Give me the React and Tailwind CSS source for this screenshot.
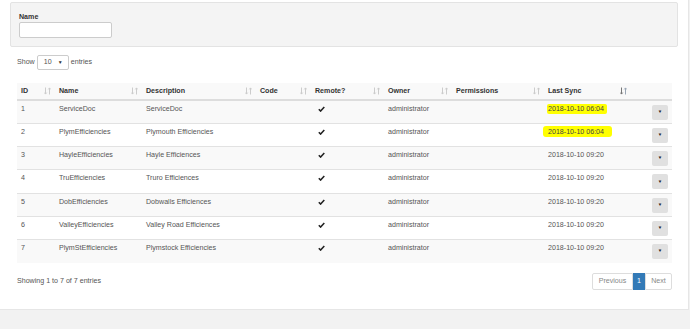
const rows = [
  { id: 1, name: "ServiceDoc", desc: "ServiceDoc", sync: "2018-10-10 06:04", hl: "a" },
  { id: 2, name: "PlymEfficiencies", desc: "Plymouth Efficiencies", sync: "2018-10-10 06:04", hl: "b" },
  { id: 3, name: "HayleEfficiencies", desc: "Hayle Efficiences", sync: "2018-10-10 09:20" },
  { id: 4, name: "TruEfficiencies", desc: "Truro Efficiences", sync: "2018-10-10 09:20" },
  { id: 5, name: "DobEfficiencies", desc: "Dobwalls Efficiences", sync: "2018-10-10 09:20" },
  { id: 6, name: "ValleyEfficiencies", desc: "Valley Road Efficiences", sync: "2018-10-10 09:20" },
  { id: 7, name: "PlymStEfficiencies", desc: "Plymstock Efficiencies", sync: "2018-10-10 09:20" },
];

const columns = [
  { label: "ID", w: "w-[38px]" },
  { label: "Name", w: "w-[87px]" },
  { label: "Description", w: "w-[114px]" },
  { label: "Code", w: "w-[55px]" },
  { label: "Remote?", w: "w-[73px]" },
  { label: "Owner", w: "w-[68px]" },
  { label: "Permissions", w: "w-[92px]" },
  { label: "Last Sync", w: "w-[87px]", active: true },
];

const SortIcon = ({ active }) => (
  <svg width="7" height="8" viewBox="0 0 7 8" className="shrink-0">
    <g fill="none" strokeWidth="1">
      <path d="M1.5 0.5v6.5M0.3 5.6l1.2 1.5 1.2-1.5" stroke={active ? "#777" : "#ccc"} />
      <path d="M5.5 7.5v-6.5M4.3 2.4l1.2-1.5 1.2 1.5" stroke={active ? "#9aa6b4" : "#ccc"} />
    </g>
  </svg>
);

const Check = () => (
  <svg width="7" height="6" viewBox="0 0 7 6" className="block">
    <path d="M0.8 3.2l1.8 1.9L6.3 0.9" fill="none" stroke="#222" strokeWidth="1.5" />
  </svg>
);

const cell = "px-[4px] align-top pt-[3px] leading-[10px]";

export default function App() {
  return (
    <div className="w-[690px] h-[329px] bg-[#f2f2f2] font-['Liberation_Sans',Arial,sans-serif] text-[7.1px] text-[#555] overflow-hidden">
      <div className="w-[689px] h-[310px] bg-white border-r border-b border-[#e6e6e6] pt-[2px]">
        {/* filter panel */}
        <div className="mx-[10px] h-[45px] bg-[#f4f4f4] border border-[#e3e3e3] rounded-[2px] px-[8px] pt-[10px]">
          <div className="font-bold text-[#333] leading-[9px]">Name</div>
          <div className="w-[93px] h-[16px] bg-white border border-[#ccc] rounded-[2px]" />
        </div>

        <div className="px-[17px]">
          {/* length selector */}
          <div className="flex items-center h-[15px] mt-[8px]">
            <span>Show</span>
            <div className="ml-[2px] w-[32px] h-[15px] border border-[#ccc] rounded-[2px] flex items-center justify-between pl-[6px] pr-[5px] text-[#555]">
              <span>10</span>
              <span className="text-[5px] text-[#333]">▼</span>
            </div>
            <span className="ml-[2px]">entries</span>
          </div>

          {/* table */}
          <table className="table-fixed border-collapse w-[655px] mt-[13px]">
            <colgroup>
              {columns.map((c) => (
                <col key={c.label} className={c.w} />
              ))}
              <col className="w-[41px]" />
            </colgroup>
            <thead>
              <tr className="bg-[#f9f9f9] h-[17px] border-b-2 border-[#ddd]">
                {columns.map((c) => (
                  <th key={c.label} className="px-[4px] text-left font-bold text-[#333]">
                    <div className="flex items-center justify-between">
                      <span>{c.label}</span>
                      <SortIcon active={c.active} />
                    </div>
                  </th>
                ))}
                <th />
              </tr>
            </thead>
            <tbody>
              {rows.map((r, i) => (
                <tr key={r.id} className={`h-[23.3px] border-t border-[#e2e2e2] first:border-t-0 ${i % 2 === 0 ? "bg-[#f9f9f9]" : "bg-white"}`}>
                  <td className={cell}>{r.id}</td>
                  <td className={cell}>{r.name}</td>
                  <td className={cell}>{r.desc}</td>
                  <td className={cell} />
                  <td className="px-[4px] align-top pt-[5px]">
                    <div className="pl-[3px]"><Check /></div>
                  </td>
                  <td className={cell}>administrator</td>
                  <td className={cell} />
                  <td className={`${cell} whitespace-nowrap`}>
                    {r.hl === "a" && (
                      <span className="bg-[#ffff00] -ml-[1px] pl-[1px] pr-[3px] py-[1px] rounded-[2px] text-[#444]">{r.sync}</span>
                    )}
                    {r.hl === "b" && (
                      <span className="bg-[#ffff00] -ml-[5px] pl-[5px] pr-[8px] py-[1.5px] rounded-[3px] text-[#444]">{r.sync}</span>
                    )}
                    {!r.hl && r.sync}
                  </td>
                  <td className="px-[4px] align-top pt-[4px]">
                    <div className="ml-auto w-[16px] h-[15px] bg-[#e0e0e0] rounded-[2px] flex items-center justify-center">
                      <span className="text-[4.5px] text-[#222]">▼</span>
                    </div>
                  </td>
                </tr>
              ))}
            </tbody>
          </table>

          {/* footer */}
          <div className="flex items-center justify-between mt-[10px] w-[655px]">
            <span>Showing 1 to 7 of 7 entries</span>
            <div className="flex h-[17px]">
              <div className="w-[41px] border border-[#ddd] rounded-l-[2px] flex items-center justify-center text-[#888]">Previous</div>
              <div className="w-[12px] bg-[#337ab7] flex items-center justify-center text-white">1</div>
              <div className="w-[27px] border border-[#ddd] rounded-r-[2px] flex items-center justify-center text-[#888]">Next</div>
            </div>
          </div>
        </div>
      </div>
    </div>
  );
}
